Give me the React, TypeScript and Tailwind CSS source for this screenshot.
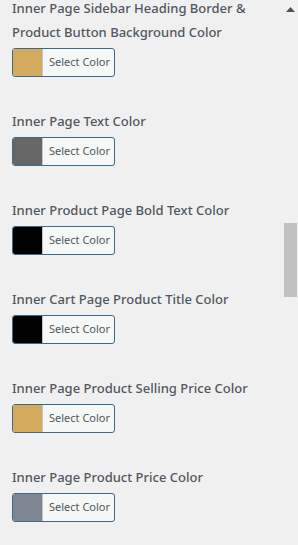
const settings = [
  { label: "Inner Page Sidebar Heading Border & Product Button Background Color", color: "#d4aa5e" },
  { label: "Inner Page Text Color", color: "#666666" },
  { label: "Inner Product Page Bold Text Color", color: "#000000" },
  { label: "Inner Cart Page Product Title Color", color: "#000000" },
  { label: "Inner Page Product Selling Price Color", color: "#d4aa5e" },
  { label: "Inner Page Product Price Color", color: "#7d8591" },
];

function ColorPicker({ label, color }: { label: string; color: string }) {
  return (
    <div className="mb-[32px]">
      <h3 className="text-[13px] leading-[24px] font-medium text-[#50575e]">{label}</h3>
      <button className="mt-[4px] flex h-[29px] w-[103px] items-stretch overflow-hidden rounded-[3px] border border-[#3c6a8c] bg-[#f6f7f7]">
        <span className="w-[30px] border-r border-[#c3c4c7]" style={{ backgroundColor: color }} />
        <span className="flex flex-1 items-center pl-[6px] text-[11px] text-[#50575e]">Select Color</span>
      </button>
    </div>
  );
}

export default function App() {
  return (
    <div className="flex h-[545px] w-[298px] overflow-hidden bg-[#f0f0f1]" style={{ fontFamily: '"Noto Sans", "Open Sans", sans-serif' }}>
      <div className="flex-1 pl-[12px] -mt-[4px]">
        {settings.map((s) => (
          <ColorPicker key={s.label} label={s.label} color={s.color} />
        ))}
      </div>
      <div className="flex w-[15px] flex-col items-center bg-[#f1f1f1]">
        <svg width="9" height="6" viewBox="0 0 9 6" className="mt-[7px]">
          <path d="M0 5 L4.5 0 L9 5 Z" fill="#505050" />
        </svg>
        <div className="mt-[210px] h-[74px] w-[13px] bg-[#c1c1c1]" />
      </div>
    </div>
  );
}
